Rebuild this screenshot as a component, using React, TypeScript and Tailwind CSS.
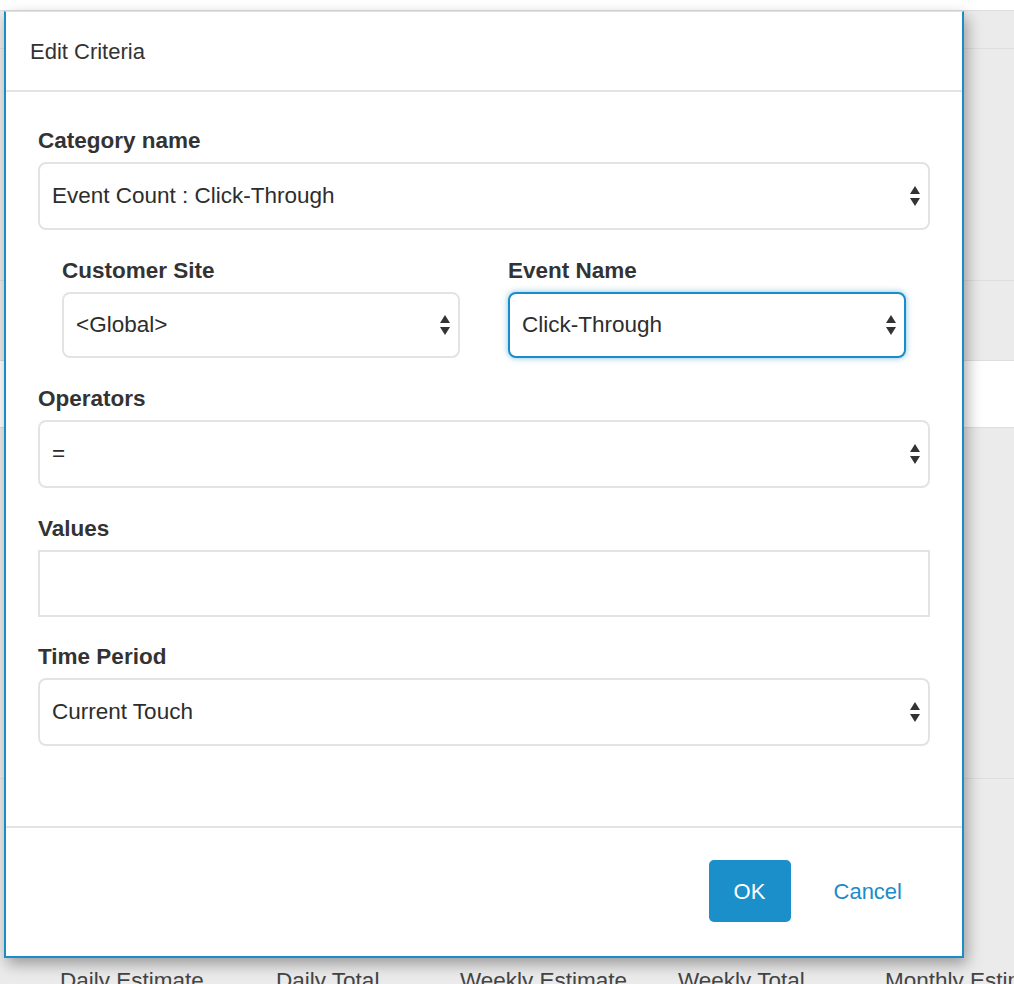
import type { ReactNode } from "react";

function Arrows() {
  return (
    <svg width="10" height="20" viewBox="0 0 10 20" className="shrink-0 text-[#333]">
      <polygon points="0,8 5,0 10,8" fill="currentColor" />
      <polygon points="0,12 10,12 5,20" fill="currentColor" />
    </svg>
  );
}

function Field({ label, children, className = "" }: { label: string; children: ReactNode; className?: string }) {
  return (
    <div className={className}>
      <label className="block h-[30px] text-[22.5px] font-bold leading-[30px] text-[#333]">{label}</label>
      <div className="mt-[6px]">{children}</div>
    </div>
  );
}

function Select({ value, focused = false, h = "h-[68px]" }: { value: string; focused?: boolean; h?: string }) {
  return (
    <div
      className={`flex ${h} items-center justify-between rounded-[8px] bg-white pl-[12px] pr-[8px] text-[22.5px] text-[#2d2d2d] ${
        focused
          ? "border-2 border-[#1a8cc8] shadow-[0_0_6px_rgba(26,140,200,0.55)]"
          : "border-2 border-[#e3e3e3]"
      }`}
    >
      <span>{value}</span>
      <Arrows />
    </div>
  );
}

export default function App() {
  return (
    <div className="relative h-[984px] w-full overflow-hidden bg-[#ebebeb] font-['Liberation_Sans',Arial,sans-serif]">
      {/* page behind the dialog */}
      <div className="flex flex-col">
        <div className="h-[10px] bg-white" />
        <div className="h-[38px] border-t border-[#dedede]" />
        <div className="h-[232px] border-t border-[#dedede]" />
        <div className="h-[80px] border-t border-[#dedede]" />
        <div className="h-[67px] border-t border-[#dedede] bg-white" />
        <div className="h-[351px] border-t border-[#dedede]" />
        <div className="h-[188px] border-t border-[#dedede]" />
        <div className="flex pl-[60px] text-[22.5px] leading-[30px] text-[#444]">
          <span className="w-[216px] shrink-0">Daily Estimate</span>
          <span className="w-[184px] shrink-0">Daily Total</span>
          <span className="w-[218px] shrink-0">Weekly Estimate</span>
          <span className="w-[207px] shrink-0">Weekly Total</span>
          <span className="shrink-0 whitespace-nowrap">Monthly Estimate</span>
        </div>
      </div>

      {/* dialog */}
      <div className="absolute left-[4px] top-[11px] flex w-[960px] flex-col border-x-2 border-b-2 border-t border-[#1a8cc8] border-t-[#e0e0e0] bg-white shadow-[3px_6px_14px_rgba(0,0,0,0.35)]">
        <div className="flex h-[80px] items-center border-b-2 border-[#e3e3e3] pl-[24px] text-[22px] text-[#333]">
          Edit Criteria
        </div>

        <div className="flex flex-col px-[32px] pb-[80px] pt-[34px]">
          <Field label="Category name">
            <Select value="Event Count : Click-Through" />
          </Field>

          <div className="mt-[26px] grid grid-cols-2 gap-x-[48px] px-[24px]">
            <Field label="Customer Site">
              <Select value="<Global>" h="h-[66px]" />
            </Field>
            <Field label="Event Name">
              <Select value="Click-Through" focused h="h-[66px]" />
            </Field>
          </div>

          <Field label="Operators" className="mt-[26px]">
            <Select value="=" />
          </Field>

          <Field label="Values" className="mt-[26px]">
            <div className="h-[67px] border-2 border-[#e3e3e3] bg-white" />
          </Field>

          <Field label="Time Period" className="mt-[25px]">
            <Select value="Current Touch" />
          </Field>
        </div>

        <div className="flex h-[130px] items-start justify-end border-t-2 border-[#e3e3e3] pr-[60px] pt-[32px]">
          <button
            type="button"
            className="flex h-[62px] w-[82px] items-center justify-center rounded-[5px] bg-[#1a8fc9] text-[22px] text-white"
          >
            OK
          </button>
          <button type="button" className="ml-[43px] flex h-[62px] items-center text-[22px] text-[#1a8cc8]">
            Cancel
          </button>
        </div>
      </div>
    </div>
  );
}
